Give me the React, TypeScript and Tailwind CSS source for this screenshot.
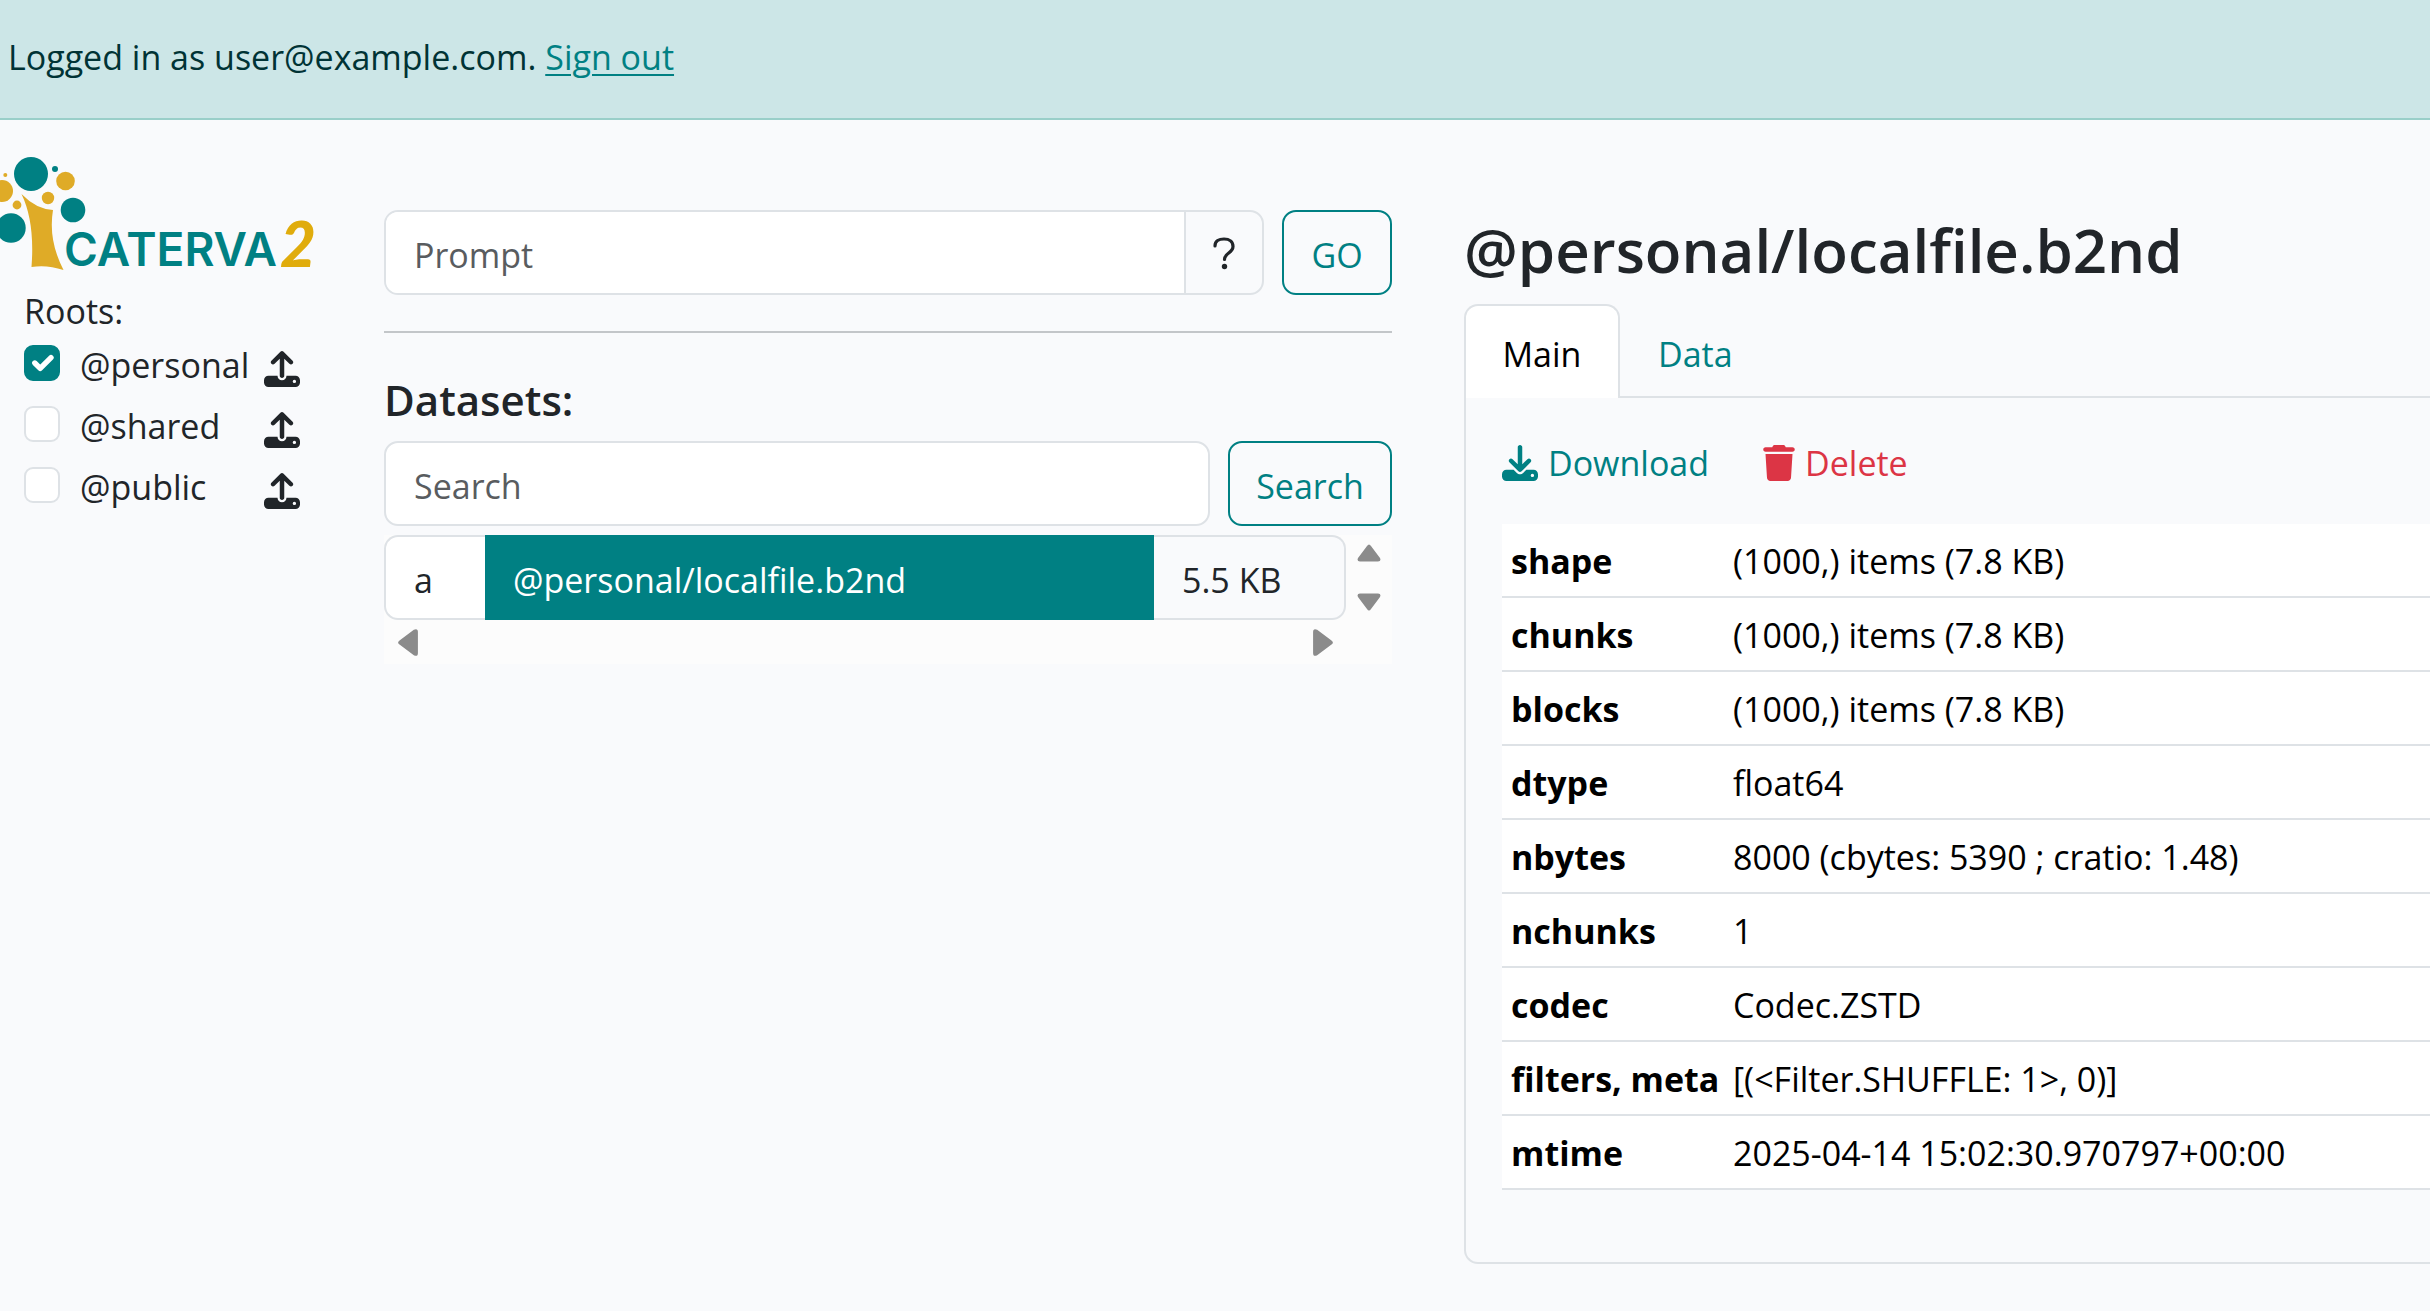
import { useState } from "react";
import { FaDownload, FaTrash, FaUpload } from "react-icons/fa6";

const roots = ["@personal", "@shared", "@public"];

const metadata = [
  ["shape", "(1000,) items (7.8 KB)"],
  ["chunks", "(1000,) items (7.8 KB)"],
  ["blocks", "(1000,) items (7.8 KB)"],
  ["dtype", "float64"],
  ["nbytes", "8000 (cbytes: 5390 ; cratio: 1.48)"],
  ["nchunks", "1"],
  ["codec", "Codec.ZSTD"],
  ["filters, meta", "[(<Filter.SHUFFLE: 1>, 0)]"],
  ["mtime", "2025-04-14 15:02:30.970797+00:00"],
];

function Logo() {
  return (
    <svg viewBox="0 0 340 140" className="block h-[140px] w-[340px]" role="img" aria-label="Caterva2">
      <g fill="#008083">
        <circle cx="31" cy="34" r="17" />
        <circle cx="55" cy="29" r="3" />
        <circle cx="73" cy="70" r="12.3" />
        <circle cx="11" cy="88" r="14.7" />
      </g>
      <g fill="#dfab27">
        <circle cx="65.500" cy="41" r="9.3" />
        <circle cx="48" cy="58" r="6.200" />
        <circle cx="17" cy="65" r="4.400" />
        <circle cx="2" cy="51" r="11" />
        <circle cx="5.300" cy="35" r="2" />
        <path d="M21.500 54 Q36 69 53 70 Q48 100 63.500 130 Q47 124.500 31.500 127 Q35 82 21.500 54 Z" />
      </g>
      <text x="64" y="126" fill="#008083" className="font-['Inter'] text-[46px] font-semibold">
        CATERVA
      </text>
      <text x="280" y="127" fill="#e0ac0c" className="font-['Lato'] text-[62px] font-black italic">
        2
      </text>
    </svg>
  );
}

function QuestionIcon() {
  return (
    <svg viewBox="0 0 24 34" className="h-[34px] w-6" fill="none" aria-hidden="true">
      <path
        d="M3 10 C3 5 7 3 12 3 C17.500 3 21 6 21 10.500 C21 17 12.500 17 12.500 23.500"
        stroke="#212529"
        strokeWidth="3.200"
        strokeLinecap="round"
      />
      <circle cx="12.500" cy="30.500" r="2.700" fill="#212529" />
    </svg>
  );
}

function Arrow({ className }: { className: string }) {
  return (
    <svg viewBox="0 0 24 18" className={className} aria-hidden="true">
      <path d="M10 2 Q12 -1 14 2 L23 14 Q24.500 17.500 21 17.500 H3 Q-0.500 17.500 1 14 Z" fill="#8b8b8b" />
    </svg>
  );
}

export default function App() {
  const [checked, setChecked] = useState<string[]>(["@personal"]);
  const toggle = (name: string) =>
    setChecked((c) => (c.includes(name) ? c.filter((n) => n !== name) : [...c, name]));

  return (
    <div className="min-h-screen overflow-x-hidden bg-[#f9fafc] font-['Open_Sans','Noto_Sans',sans-serif] text-[34px] leading-[54px] text-[#212529]">
      <header className="border-b-2 border-[#99cfc9] bg-[#cce6e7] px-2 pb-[34px] pt-[30px] text-[#003335]">
        Logged in as user@example.com.{" "}
        <a href="#sign-out" className="text-[#008083] underline decoration-2 underline-offset-4">
          Sign out
        </a>
      </header>

      <div className="grid grid-cols-[384fr_1008fr_1038fr]">
        <aside className="pt-5">
          <Logo />
          <div className="pl-6 pt-1">
            <p>Roots:</p>
            <ul className="-mt-1">
              {roots.map((name) => (
                <li key={name} className="flex h-[61px] w-[276px] items-center justify-between">
                  <label className="flex items-center gap-5">
                    <span className="relative mb-1 grid size-9">
                      <input
                        type="checkbox"
                        checked={checked.includes(name)}
                        onChange={() => toggle(name)}
                        className="size-9 appearance-none rounded-[9px] border-2 border-[#dee2e6] bg-white checked:border-[#008083] checked:bg-[#008083]"
                      />
                      {checked.includes(name) && (
                        <svg viewBox="0 0 20 20" className="pointer-events-none absolute inset-0 size-9" fill="none" aria-hidden="true">
                          <path d="M6 10l3 3 6-6" stroke="#fff" strokeWidth="3" strokeLinecap="round" strokeLinejoin="round" />
                        </svg>
                      )}
                    </span>
                    {name}
                  </label>
                  <button type="button" aria-label={"Upload to " + name} className="pt-2">
                    <FaUpload className="size-9" />
                  </button>
                </li>
              ))}
            </ul>
          </div>
        </aside>

        <main className="pt-[90px]">
          <form className="flex gap-[18px]" onSubmit={(e) => e.preventDefault()}>
            <div className="flex h-[85px] grow overflow-hidden rounded-[14px] border-2 border-[#dee2e6]">
              <input
                aria-label="Prompt"
                placeholder="Prompt"
                className="min-w-0 grow bg-white px-7 pt-1 outline-none placeholder:text-[#595c5f]"
              />
              <button type="button" aria-label="Help" className="grid w-[78px] place-items-center border-l-2 border-[#dee2e6]">
                <QuestionIcon />
              </button>
            </div>
            <button type="submit" className="h-[85px] w-[110px] rounded-[14px] border-2 border-[#008083] pt-1 text-[#008083]">
              GO
            </button>
          </form>

          <hr className="my-9 border-t-2 border-[#c3c6c9]" />

          <h2 className="mb-[14px] pt-1 text-[42px] font-semibold">Datasets:</h2>
          <form className="flex gap-[18px]" onSubmit={(e) => e.preventDefault()}>
            <input
              aria-label="Search datasets"
              placeholder="Search"
              className="h-[85px] min-w-0 grow rounded-[14px] border-2 border-[#dee2e6] bg-white px-7 pt-1 outline-none placeholder:text-[#595c5f]"
            />
            <button type="submit" className="h-[85px] w-[164px] rounded-[14px] border-2 border-[#008083] pt-1 text-[#008083]">
              Search
            </button>
          </form>

          <div className="mt-[9px] bg-[#fcfcfc]">
            <div className="flex">
              <a href="#localfile" className="flex h-[85px] grow items-stretch">
                <span className="flex w-[101px] items-center rounded-l-[14px] border-2 border-r-0 border-[#dee2e6] bg-white pl-7 pt-1">
                  a
                </span>
                <span className="flex grow items-center bg-[#008083] pl-7 pt-1 text-white">@personal/localfile.b2nd</span>
                <span className="flex w-[192px] items-center rounded-r-[14px] border-2 border-l-0 border-[#dee2e6] bg-[#f9fafc] pl-7 pt-1">
                  5.5 KB
                </span>
              </a>
              <div className="flex w-[46px] flex-col items-center justify-between py-[9px]">
                <Arrow className="h-[18px] w-6" />
                <Arrow className="h-[18px] w-6 rotate-180" />
              </div>
            </div>
            <div className="flex h-[44px] items-center justify-between pl-[10px] pr-[55px]">
              <Arrow className="h-[21px] w-7 -rotate-90" />
              <Arrow className="h-[21px] w-7 rotate-90" />
            </div>
          </div>
        </main>

        <section className="pl-[72px] pt-[90px]">
          <h1 className="mb-4 whitespace-nowrap pt-0.5 text-[60px] font-semibold leading-[76px]">@personal/localfile.b2nd</h1>
          <div role="tablist" className="flex border-b-2 border-[#dee2e6]">
            <button
              type="button"
              role="tab"
              aria-selected="true"
              className="-mb-0.5 h-[94px] w-[156px] rounded-t-[14px] border-2 border-b-0 border-[#dee2e6] bg-white pt-1 text-black"
            >
              Main
            </button>
            <button type="button" role="tab" aria-selected="false" className="px-[38px] pt-2 text-[#008083]">
              Data
            </button>
          </div>
          <div role="tabpanel" className="rounded-bl-[14px] border-b-2 border-l-2 border-[#dee2e6] pb-[72px] pl-9 pt-9">
            <div className="mb-[34px] flex gap-[54px] pt-0.5">
              <a href="#download" className="flex items-center gap-2.5 text-[#008083]">
                <FaDownload className="size-9" />
                Download
              </a>
              <button type="button" className="flex items-center gap-2.5 text-[#dc3545]">
                <FaTrash className="h-9 w-8" />
                Delete
              </button>
            </div>
            <table className="w-full border-collapse bg-white text-black">
              <tbody>
                {metadata.map(([key, value]) => (
                  <tr key={key} className="border-b-2 border-[#dee2e6]">
                    <th scope="row" className="w-[222px] whitespace-nowrap pb-2 pl-[9px] pt-2.5 text-left font-bold">
                      {key}
                    </th>
                    <td className="pb-2 pl-[9px] pt-2.5">{value}</td>
                  </tr>
                ))}
              </tbody>
            </table>
          </div>
        </section>
      </div>
    </div>
  );
}
